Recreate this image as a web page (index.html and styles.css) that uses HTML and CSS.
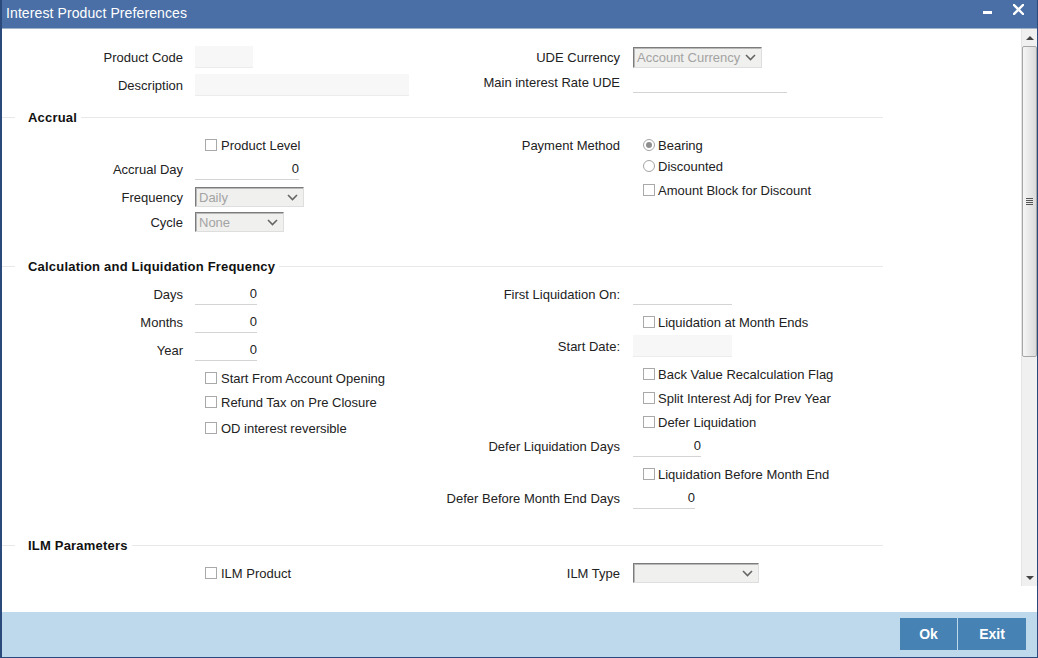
FILE: index.html
```html
<!DOCTYPE html>
<html lang="en">
<head>
  <meta charset="UTF-8" />
  <title>Interest Product Preferences</title>
  <link rel="stylesheet" href="styles.css">
</head>
<body>

  <div class="window">

    <!-- Title Bar -->
    <div class="titlebar">
      <span class="title">Interest Product Preferences</span>
      <div class="win-ctrls">
        <span class="min"></span>
        <svg class="close" width="11" height="11" viewBox="0 0 11 11">
          <path d="M1 1 L10 10 M10 1 L1 10" stroke="#fff" stroke-width="2.4" stroke-linecap="square"/>
        </svg>
      </div>
    </div>

    <div class="body">
      <div class="content">

        <!-- Header fields -->
        <div class="section">
          <div class="col left">
            <div class="row mt18"><span class="lbl">Product Code</span><input class="fld grey w58" readonly></div>
            <div class="row mt8"><span class="lbl">Description</span><input class="fld grey w214" readonly></div>
          </div>
          <div class="col right">
            <div class="row mt18"><span class="lbl">UDE Currency</span>
              <div class="select w129 h21"><span>Account Currency</span>
                <svg width="11" height="7" viewBox="0 0 11 7"><polyline points="1,1 5.5,5.5 10,1" fill="none" stroke="#666" stroke-width="1.6"/></svg>
              </div>
            </div>
            <div class="row mt5"><span class="lbl">Main interest Rate UDE</span><input class="fld line w154" readonly></div>
          </div>
        </div>

        <!-- Accrual -->
        <div class="legend mt12"><span>Accrual</span></div>
        <div class="section">
          <div class="col left">
            <div class="row mt8"><span class="lbl"></span><label class="chk"><span class="box"></span>Product Level</label></div>
            <div class="row mt4"><span class="lbl">Accrual Day</span><input class="fld line num w104" value="0" readonly></div>
            <div class="row mt8"><span class="lbl">Frequency</span>
              <div class="select w109"><span>Daily</span>
                <svg width="11" height="7" viewBox="0 0 11 7"><polyline points="1,1 5.5,5.5 10,1" fill="none" stroke="#666" stroke-width="1.6"/></svg>
              </div>
            </div>
            <div class="row mt5"><span class="lbl">Cycle</span>
              <div class="select w89"><span>None</span>
                <svg width="11" height="7" viewBox="0 0 11 7"><polyline points="1,1 5.5,5.5 10,1" fill="none" stroke="#666" stroke-width="1.6"/></svg>
              </div>
            </div>
          </div>
          <div class="col right">
            <div class="row mt8"><span class="lbl">Payment Method</span><label class="chk"><span class="radio on"></span>Bearing</label></div>
            <div class="row mt1"><span class="lbl"></span><label class="chk"><span class="radio"></span>Discounted</label></div>
            <div class="row mt4"><span class="lbl"></span><label class="chk"><span class="box"></span>Amount Block for Discount</label></div>
          </div>
        </div>

        <!-- Calculation and Liquidation Frequency -->
        <div class="legend mt24"><span>Calculation and Liquidation Frequency</span></div>
        <div class="section">
          <div class="col left">
            <div class="row mt8"><span class="lbl">Days</span><input class="fld line num w62" value="0" readonly></div>
            <div class="row mt8"><span class="lbl">Months</span><input class="fld line num w62" value="0" readonly></div>
            <div class="row mt8"><span class="lbl">Year</span><input class="fld line num w62" value="0" readonly></div>
            <div class="row mt8"><span class="lbl"></span><label class="chk"><span class="box"></span>Start From Account Opening</label></div>
            <div class="row mt4"><span class="lbl"></span><label class="chk"><span class="box"></span>Refund Tax on Pre Closure</label></div>
            <div class="row mt6"><span class="lbl"></span><label class="chk"><span class="box"></span>OD interest reversible</label></div>
          </div>
          <div class="col right">
            <div class="row mt8"><span class="lbl">First Liquidation On:</span><input class="fld line w99" readonly></div>
            <div class="row mt8"><span class="lbl"></span><label class="chk"><span class="box"></span>Liquidation at Month Ends</label></div>
            <div class="row mt4"><span class="lbl">Start Date:</span><input class="fld grey w99" readonly></div>
            <div class="row mt8"><span class="lbl"></span><label class="chk"><span class="box"></span>Back Value Recalculation Flag</label></div>
            <div class="row mt4"><span class="lbl"></span><label class="chk"><span class="box"></span>Split Interest Adj for Prev Year</label></div>
            <div class="row mt4"><span class="lbl"></span><label class="chk"><span class="box"></span>Defer Liquidation</label></div>
            <div class="row mt4"><span class="lbl">Defer Liquidation Days</span><input class="fld line num w68" value="0" readonly></div>
            <div class="row mt8"><span class="lbl"></span><label class="chk"><span class="box"></span>Liquidation Before Month End</label></div>
            <div class="row mt4"><span class="lbl">Defer Before Month End Days</span><input class="fld line num w62" value="0" readonly></div>
          </div>
        </div>

        <!-- ILM Parameters -->
        <div class="legend mt27"><span>ILM Parameters</span></div>
        <div class="section">
          <div class="col left">
            <div class="row mt8"><span class="lbl"></span><label class="chk"><span class="box"></span>ILM Product</label></div>
          </div>
          <div class="col right">
            <div class="row mt8"><span class="lbl">ILM Type</span>
              <div class="select w126"><span></span>
                <svg width="11" height="7" viewBox="0 0 11 7"><polyline points="1,1 5.5,5.5 10,1" fill="none" stroke="#666" stroke-width="1.6"/></svg>
              </div>
            </div>
          </div>
        </div>

      </div>

      <!-- Scrollbar -->
      <div class="scrollbar">
        <div class="sb-btn"><span class="arrow up"></span></div>
        <div class="thumb"><span class="grip"></span></div>
        <div class="sb-track"></div>
        <div class="sb-btn"><span class="arrow down"></span></div>
      </div>
    </div>

    <!-- Footer -->
    <div class="footer">
      <button class="btn">Ok</button>
      <button class="btn wide">Exit</button>
    </div>

  </div>

</body>
</html>
```

FILE: styles.css
```css
* {
  box-sizing: border-box;
  margin: 0;
  padding: 0;
}

body {
  font-family: "Liberation Sans", Arial, sans-serif;
  font-size: 13px;
  color: #222;
  background: #fff;
}

.window {
  width: 1038px;
  height: 658px;
  display: flex;
  flex-direction: column;
  border-left: 2px solid #2b4a7c;
  border-right: 1px solid #2b4a7c;
  border-bottom: 1px solid #2b4a7c;
  overflow: hidden;
}

/* Title bar */
.titlebar {
  height: 29px;
  flex-shrink: 0;
  display: flex;
  justify-content: space-between;
  background: #4a6fa6;
  border-bottom: 1px solid #9fb1c6;
  color: #fff;
}

.title {
  font-size: 14px;
  letter-spacing: 0.1px;
  padding-left: 4px;
  line-height: 27px;
}

.win-ctrls {
  display: flex;
  align-items: flex-start;
  gap: 21px;
  padding-right: 13px;
}

.min {
  width: 9px;
  height: 3px;
  margin-top: 11px;
  background: #fff;
}

.close {
  margin-top: 4px;
}

/* Body */
.body {
  flex: 1;
  display: flex;
  background: #fff;
}

.content {
  flex: 1;
  overflow: hidden;
}

.section {
  display: flex;
  align-items: flex-start;
}

.col.left {
  width: 418px;
}

.row {
  display: grid;
  align-items: center;
  height: 20px;
}

.left .row {
  grid-template-columns: 181px auto;
  column-gap: 12px;
}

.right .row {
  grid-template-columns: 200px auto;
  column-gap: 13px;
}

.lbl {
  text-align: right;
  white-space: nowrap;
}

.mt1 { margin-top: 1px; }
.mt4 { margin-top: 4px; }
.mt5 { margin-top: 5px; }
.mt6 { margin-top: 6px; }
.mt8 { margin-top: 8px; }
.mt12 { margin-top: 12px; }
.mt18 { margin-top: 18px; }
.mt24 { margin-top: 24px; }
.mt27 { margin-top: 27px; }

/* Fields */
.fld {
  height: 22px;
  margin: -1px 0;
  border: none;
  font: inherit;
  color: #222;
  padding: 0 3px;
  outline: none;
}

.fld.grey {
  background: #f7f7f7;
  border-bottom: 1px solid #ececec;
}

.fld.line {
  background: #fff;
  border-bottom: 1px solid #d4d4d4;
}

.fld.num {
  text-align: right;
  padding-right: 0;
}

.w58 { width: 58px; }
.w62 { width: 62px; }
.w68 { width: 68px; }
.w89 { width: 89px; }
.w99 { width: 99px; }
.w104 { width: 104px; }
.w109 { width: 109px; }
.w126 { width: 126px; }
.w129 { width: 129px; }
.w154 { width: 154px; }
.w214 { width: 214px; }

.select {
  height: 20px;
  display: flex;
  align-items: center;
  justify-content: space-between;
  padding: 0 5px 0 3px;
  background: #f0f0ee;
  border: 1px solid;
  border-color: #7c7c7c #dedede #dedede #7c7c7c;
  box-shadow: inset 1px 1px 0 #b8b8b8;
  color: #a3a3a3;
}

.select.h21 {
  height: 21px;
}

/* Checkboxes and radios */
.chk {
  display: flex;
  align-items: center;
  gap: 4px;
  margin-left: 10px;
  white-space: nowrap;
}

.right .chk {
  gap: 3px;
}

.box {
  width: 12px;
  height: 12px;
  border: 1px solid #a9a9a9;
  background: #fff;
}

.radio {
  width: 12px;
  height: 12px;
  border: 1px solid #a4a4a4;
  border-radius: 50%;
  background: #fff;
  display: flex;
  align-items: center;
  justify-content: center;
}

.radio.on::after {
  content: "";
  width: 6px;
  height: 6px;
  border-radius: 50%;
  background: #8e8e8e;
}

/* Section legends */
.legend {
  width: 881px;
  height: 20px;
  display: flex;
  align-items: center;
  font-weight: bold;
  letter-spacing: 0.2px;
  color: #111;
}

.legend::before {
  content: "";
  width: 13px;
  border-top: 1px solid #e8e8e8;
}

.legend span {
  margin: 0 4px 0 13px;
}

.legend::after {
  content: "";
  flex: 1;
  border-top: 1px solid #e8e8e8;
}

/* Scrollbar */
.scrollbar {
  width: 16px;
  margin-bottom: 26px;
  display: flex;
  flex-direction: column;
  background: #f0f0f0;
  border-left: 1px solid #e4e4e4;
}

.sb-btn {
  height: 17px;
  display: flex;
  align-items: center;
  justify-content: center;
}

.arrow {
  width: 0;
  height: 0;
  border-left: 4px solid transparent;
  border-right: 4px solid transparent;
}

.arrow.up {
  border-bottom: 4px solid #444;
}

.arrow.down {
  border-top: 4px solid #444;
}

.thumb {
  height: 311px;
  border: 1px solid #a6a6a6;
  border-radius: 2px;
  background: linear-gradient(to right, #f6f6f6, #dadada);
  display: flex;
  align-items: center;
  justify-content: center;
}

.grip {
  width: 7px;
  height: 7px;
  background: repeating-linear-gradient(to bottom, #555 0 1px, transparent 1px 2px);
}

.sb-track {
  flex: 1;
}

/* Footer */
.footer {
  height: 45px;
  flex-shrink: 0;
  display: flex;
  justify-content: flex-end;
  align-items: flex-start;
  gap: 1px;
  padding: 6px 11px 0 0;
  background: #bfd9ec;
}

.btn {
  height: 32px;
  width: 57px;
  border: none;
  background: #4682b4;
  color: #fff;
  font-family: "Liberation Sans", Arial, sans-serif;
  font-size: 14px;
  font-weight: bold;
  cursor: pointer;
}

.btn.wide {
  width: 68px;
}
```
